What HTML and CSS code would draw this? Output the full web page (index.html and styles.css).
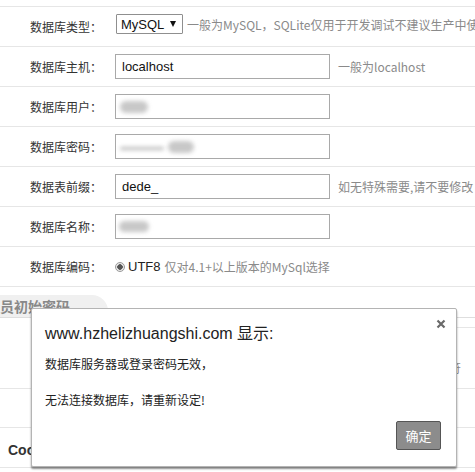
FILE: index.html
```html
<!DOCTYPE html>
<html lang="zh-CN">
<head>
<meta charset="utf-8">
<title>DedeCMS 安装</title>
<link rel="stylesheet" href="styles.css">
</head>
<body>
<div class="page">
  <div class="toprule"></div>

  <div class="row">
    <div class="label">数据库类型：</div>
    <div class="field field-top">
      <div class="select"><span>MySQL</span><span class="arrow"></span></div>
      <span class="hint">一般为MySQL，SQLite仅用于开发调试不建议生产中使用</span>
    </div>
  </div>

  <div class="row">
    <div class="label">数据库主机：</div>
    <div class="field">
      <div class="input">localhost</div>
      <span class="hint">一般为localhost</span>
    </div>
  </div>

  <div class="row">
    <div class="label">数据库用户：</div>
    <div class="field">
      <div class="input"><span class="blur blur-user"></span></div>
    </div>
  </div>

  <div class="row">
    <div class="label">数据库密码：</div>
    <div class="field">
      <div class="input"><span class="blur blur-pass"></span><span class="blur blur-pass2"></span></div>
    </div>
  </div>

  <div class="row">
    <div class="label">数据表前缀：</div>
    <div class="field">
      <div class="input">dede_</div>
      <span class="hint">如无特殊需要,请不要修改</span>
    </div>
  </div>

  <div class="row">
    <div class="label">数据库名称：</div>
    <div class="field">
      <div class="input"><span class="blur blur-name"></span></div>
    </div>
  </div>

  <div class="row">
    <div class="label">数据库编码：</div>
    <div class="field field-radio">
      <span class="radio"></span>
      <span class="utf">UTF8</span>
      <span class="hint">仅对4.1+以上版本的MySql选择</span>
    </div>
  </div>

  <div class="section">
    <div class="tab">管理员初始密码</div>
  </div>

  <div class="admin">
    <div class="row row-tall">
      <div class="label"></div>
      <div class="field">
        <div class="input input-empty"></div>
        <div class="hint hint-wrap">
          <div class="l2"><span>以内范围的字符</span></div>
        </div>
      </div>
    </div>

    <div class="row row-short">
      <div class="label"></div>
      <div class="field">
        <div class="input input-empty"></div>
      </div>
    </div>

    <div class="row">
      <div class="label label-latin"><b>Coo</b></div>
      <div class="field">
        <div class="input input-empty"></div>
      </div>
    </div>
  </div>
</div>

<div class="dialog">
  <div class="dialog-title">www.hzhelizhuangshi.com 显示:</div>
  <span class="close">
    <svg width="10" height="10" viewBox="0 0 10 10"><path d="M1.5 1.5 L8.5 8.5 M8.5 1.5 L1.5 8.5" stroke="#6a6a6a" stroke-width="2.2" stroke-linecap="butt"/></svg>
  </span>
  <div class="dialog-msg">数据库服务器或登录密码无效，<br><br>无法连接数据库，请重新设定!</div>
  <div class="dialog-foot"><button class="btn">确定</button></div>
</div>
</body>
</html>
```

FILE: styles.css
```css
html, body {
  margin: 0;
  padding: 0;
  background: #fff;
}
body {
  width: 475px;
  height: 472px;
  overflow: hidden;
  position: relative;
  font-family: "Noto Sans CJK SC", "Liberation Sans", sans-serif;
  font-size: 12px;
  color: #333;
}
.page {
  width: 475px;
}
.toprule {
  height: 6px;
  border-bottom: 1px solid #e6e6e6;
}
.row {
  display: grid;
  grid-template-columns: 115px 1fr;
  height: 39px;
  border-bottom: 1px solid #e6e6e6;
  align-items: center;
}
.row-tall {
  height: 60px;
}
.row-short {
  height: 38px;
}
.label {
  text-align: right;
  padding-right: 13px;
  white-space: nowrap;
  color: #333;
  line-height: 16px;
}
.label-latin {
  text-align: left;
  padding: 4px 0 0 8px;
}
.label-latin b {
  font-family: "Liberation Sans", sans-serif;
  font-size: 14px;
  color: #333;
}
.field {
  display: flex;
  align-items: center;
  gap: 8px;
  white-space: nowrap;
  min-width: 0;
}
.field-top {
  gap: 4px;
  margin-top: -5px;
}
.select {
  flex-shrink: 0;
  box-sizing: border-box;
  width: 67px;
  height: 20px;
  margin-left: 1px;
  border: 1px solid #8f8f8f;
  border-radius: 1px;
  display: flex;
  align-items: center;
  padding-left: 4px;
  font-family: "Liberation Sans", sans-serif;
  font-size: 13px;
  color: #111;
}
.select .arrow {
  width: 0;
  height: 0;
  border-left: 3.5px solid transparent;
  border-right: 3.5px solid transparent;
  border-top: 6px solid #111;
  margin-left: 6px;
}
.input {
  flex-shrink: 0;
  box-sizing: border-box;
  width: 215px;
  height: 25px;
  border: 1px solid #a9a9a9;
  padding-left: 6px;
  display: flex;
  align-items: center;
  font-family: "Liberation Sans", sans-serif;
  font-size: 13px;
  color: #111;
}
.hint {
  color: #8a8a8a;
  font-size: 12px;
}
.hint-wrap {
  width: 123px;
  height: 40px;
  line-height: 20px;
  padding-top: 20px;
  box-sizing: border-box;
}
.l2 {
  display: flex;
  justify-content: flex-end;
  white-space: nowrap;
}
.blur {
  display: inline-block;
  background: #c8c8c8;
  filter: blur(2px);
  border-radius: 6px;
}
.blur-user { width: 28px; height: 12px; margin-left: -2px; }
.blur-name { width: 30px; height: 11px; margin-left: -3px; }
.blur-pass { width: 44px; height: 3px; margin-left: -2px; margin-top: 4px; background: #b8b8b8; }
.blur-pass2 { width: 26px; height: 12px; margin-left: 4px; }
.field-radio {
  gap: 0;
}
.radio {
  flex-shrink: 0;
  box-sizing: border-box;
  width: 10px;
  height: 10px;
  border-radius: 50%;
  border: 1px solid #9a9a9a;
  background: radial-gradient(circle, #555 0 2.5px, #e8e8e8 3px);
  margin-right: 3px;
}
.utf {
  font-family: "Liberation Sans", sans-serif;
  font-size: 13px;
  color: #222;
  margin-right: 4px;
}
.section {
  height: 30px;
  border-bottom: 1px solid #dedede;
  position: relative;
  overflow: hidden;
}
.tab {
  position: absolute;
  left: -30px;
  bottom: 0;
  width: 138px;
  box-sizing: border-box;
  height: 22px;
  padding-left: 2px;
  background: #f0f0f0;
  border-radius: 0 16px 0 0;
  font-size: 14px;
  font-weight: bold;
  color: #888;
  line-height: 22px;
  white-space: nowrap;
}
.admin {
  margin-top: 9px;
  border-top: 1px solid #e6e6e6;
  margin-left: 40px;
}
.admin .row {
  margin-left: -40px;
}
.dialog {
  position: absolute;
  left: 31px;
  top: 308px;
  width: 426px;
  height: 159px;
  box-sizing: border-box;
  background: #fff;
  border: 1px solid #b4b4b4;
  border-radius: 2px;
  box-shadow: 0 2px 2px rgba(0,0,0,0.45);
}
.dialog-title {
  position: absolute;
  left: 13px;
  top: 15px;
  font-size: 16px;
  line-height: 20px;
  color: #222;
  font-family: "Liberation Sans", "Noto Sans CJK SC", sans-serif;
}
.close {
  position: absolute;
  right: 10px;
  top: 10px;
  width: 10px;
  height: 10px;
  line-height: 0;
}
.dialog-msg {
  position: absolute;
  left: 13px;
  top: 46px;
  font-size: 12px;
  line-height: 18px;
  color: #222;
}
.dialog-foot {
  position: absolute;
  right: 15px;
  bottom: 16px;
}
.btn {
  box-sizing: border-box;
  width: 45px;
  height: 29px;
  padding: 0;
  border: 1px solid #555;
  border-radius: 2px;
  background: #8c8c8c;
  color: #fff;
  font-family: "Noto Sans CJK SC", sans-serif;
  font-size: 13px;
}
```
